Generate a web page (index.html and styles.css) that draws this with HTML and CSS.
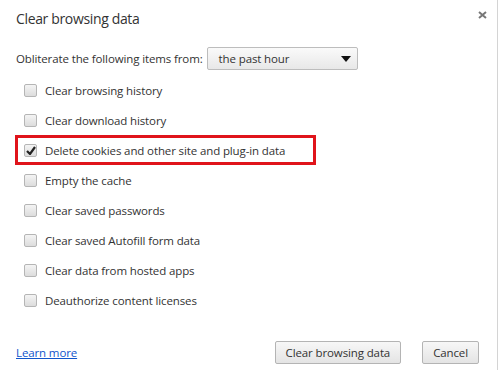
FILE: index.html
```html
<!DOCTYPE html>
<html lang="en">
<head>
    <meta charset="UTF-8">
    <title>Clear browsing data</title>
    <link rel="stylesheet" href="styles.css">
</head>
<body>
    <div class="dialog">
        <div class="title-bar">
            <h1>Clear browsing data</h1>
            <svg class="close" width="9" height="8" viewBox="0 0 9 8">
                <path d="M1 1 L8 7 M8 1 L1 7" stroke="#777" stroke-width="2"/>
            </svg>
        </div>

        <div class="period">
            <span>Obliterate the following items from:</span>
            <div class="dropdown">
                <span>the past hour</span>
                <span class="arrow"></span>
            </div>
        </div>

        <div class="options">
            <div class="row"><span class="box"></span>Clear browsing history</div>
            <div class="row"><span class="box"></span>Clear download history</div>
            <div class="row marked"><span class="box checked"><svg width="10" height="9" viewBox="0 0 10 9"><path d="M1 5 L4 8 L9 1" stroke="#222" stroke-width="2.2" fill="none"/></svg></span>Delete cookies and other site and plug-in data</div>
            <div class="row"><span class="box"></span>Empty the cache</div>
            <div class="row"><span class="box"></span>Clear saved passwords</div>
            <div class="row"><span class="box"></span>Clear saved Autofill form data</div>
            <div class="row"><span class="box"></span>Clear data from hosted apps</div>
            <div class="row"><span class="box"></span>Deauthorize content licenses</div>
        </div>

        <div class="footer">
            <a href="#" class="learn">Learn more</a>
            <div class="buttons">
                <button class="btn">Clear browsing data</button>
                <button class="btn">Cancel</button>
            </div>
        </div>
    </div>
</body>
</html>
```

FILE: styles.css
```css
body { margin: 0; font-family: 'Open Sans', sans-serif; font-size: 11.5px; letter-spacing: -0.12px; color: #333; background: #fff; }
.dialog {
    width: 498px;
    height: 370px;
    border-right: 1px solid #d4d4d4;
    padding: 9px 0 0 16px;
    box-sizing: border-box;
}
.title-bar { display: flex; justify-content: space-between; align-items: flex-start; padding-right: 10px; }
h1 { margin: 0; font-size: 14px; letter-spacing: -0.35px; font-weight: normal; line-height: 20px; color: #333; }
.close { margin-top: 2px; }

.period { display: flex; align-items: center; gap: 4px; margin-top: 18px; height: 23px; }
.dropdown {
    width: 151px;
    height: 23px;
    box-sizing: border-box;
    border: 1px solid #bdbdbd;
    border-radius: 2px;
    background: linear-gradient(#fafafa, #e8e8e8);
    display: flex;
    align-items: center;
    justify-content: space-between;
    padding: 0 6px 0 11px;
}
.arrow {
    width: 0;
    height: 0;
    border-left: 5px solid transparent;
    border-right: 5px solid transparent;
    border-top: 6px solid #111;
}

.options { margin-top: 5px; }
.row { display: flex; align-items: center; height: 30px; padding-left: 8px; }
.row.marked {
    width: 299px;
    height: 28px;
    margin: 1px 0;
    box-sizing: border-box;
    outline: 3px solid #e0141b;
    outline-offset: -2px;
}
.box {
    width: 13px;
    height: 13px;
    box-sizing: border-box;
    border: 1px solid #b5b5b5;
    border-radius: 2px;
    background: linear-gradient(#f4f4f4, #dcdcdc);
    margin-right: 8px;
    display: flex;
    align-items: center;
    justify-content: center;
}

.footer { display: flex; justify-content: space-between; align-items: center; margin-top: 26px; padding-right: 18px; }
.learn { color: #1155cc; }
.buttons { display: flex; gap: 21px; }
.btn {
    height: 23px;
    font-family: 'Open Sans', sans-serif;
    font-size: 11.5px;
    letter-spacing: -0.12px;
    color: #333;
    border: 1px solid #b4b4b4;
    border-radius: 2px;
    background: linear-gradient(#f7f7f7, #e4e4e4);
    padding: 0 10px;
}
```
